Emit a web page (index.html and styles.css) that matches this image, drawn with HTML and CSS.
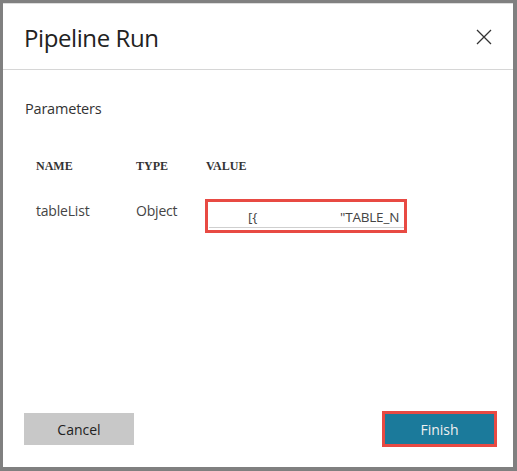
FILE: index.html
```html
<!DOCTYPE html>
<html>
<head>
<meta charset="utf-8">
<link rel="stylesheet" href="styles.css">
</head>
<body>
<div class="dialog">
  <div class="header">
    <h1 class="title">Pipeline Run</h1>
    <svg class="close" width="16" height="16" viewBox="0 0 16 16"><path d="M1 1 L15 15 M15 1 L1 15" stroke="#333" stroke-width="1.3" fill="none"/></svg>
  </div>
  <div class="content">
    <div class="section">Parameters</div>
    <div class="grid">
      <div class="th c1">NAME</div>
      <div class="th c2">TYPE</div>
      <div class="th c3">VALUE</div>
      <div class="td c1">tableList</div>
      <div class="td c2">Object</div>
      <div class="td c3"><div class="input"><span class="v1">[{</span><span class="v2">"TABLE_N</span></div></div>
    </div>
  </div>
  <div class="footer">
    <button class="btn cancel">Cancel</button>
    <div class="hl"><button class="btn finish">Finish</button></div>
  </div>
</div>
</body>
</html>
```
FILE: styles.css
```css
html, body { margin: 0; padding: 0; }
body {
  width: 517px; height: 471px;
  background: #808080;
  font-family: "Open Sans", "Noto Sans", sans-serif;
  color: #333;
  box-sizing: border-box;
  padding: 3px 4px 4px 3px;
  overflow: hidden;
}
.dialog {
  background: #fff;
  height: 100%;
  display: flex;
  flex-direction: column;
  border-top: 1px solid #ddd;
  box-sizing: border-box;
}
.header {
  height: 65px;
  border-bottom: 1px solid #d6d6d6;
  display: flex;
  align-items: center;
  justify-content: space-between;
  padding: 0 21px 0 21px;
}
.title {
  margin: 0;
  font-weight: 400;
  font-size: 24px;
  color: #222;
  letter-spacing: -0.4px;
  padding-top: 1px;
}
.content { padding: 29px 22px 0 22px; flex: 1; }
.section { font-size: 14.5px; color: #333; letter-spacing: -0.2px; }
.grid {
  display: grid;
  grid-template-columns: 100px 70px 204px;
  margin-top: 41px;
  padding-left: 11px;
}
.th {
  font-family: "Liberation Serif", serif;
  font-weight: bold;
  font-size: 12px;
  color: #333;
  height: 40px;
}
.td { font-size: 14px; color: #444; letter-spacing: -0.2px; padding-top: 2px; }
.input {
  border: 3px solid #e84a43;
  height: 28px;
  box-sizing: content-box;
  width: 196px;
  margin-left: -1px;
  margin-top: -2px;
  position: relative;
  overflow: hidden;
  white-space: nowrap;
  font-size: 13.5px;
  color: #444;
  line-height: 28px;
}
.input::after {
  content: "";
  position: absolute;
  left: 1px; right: 0; bottom: 2px;
  border-bottom: 1px solid #cfcfcf;
}
.v1 { position: absolute; left: 40px; top: 1px; }
.v2 { position: absolute; left: 132px; top: 1px; }
.footer {
  display: flex;
  justify-content: space-between;
  align-items: center;
  padding: 0 16px 20px 21px;
}
.btn {
  border: none;
  font-family: "Open Sans", "Noto Sans", sans-serif;
  font-size: 14px;
  cursor: pointer;
}
.cancel {
  width: 110px; height: 32px;
  background: #c8c8c8;
  color: #222;
}
.hl {
  border: 3px solid #e84a43;
  display: flex;
}
.finish {
  width: 109px; height: 30px;
  background: #1b7a9b;
  color: #f0f0f0;
}
```
